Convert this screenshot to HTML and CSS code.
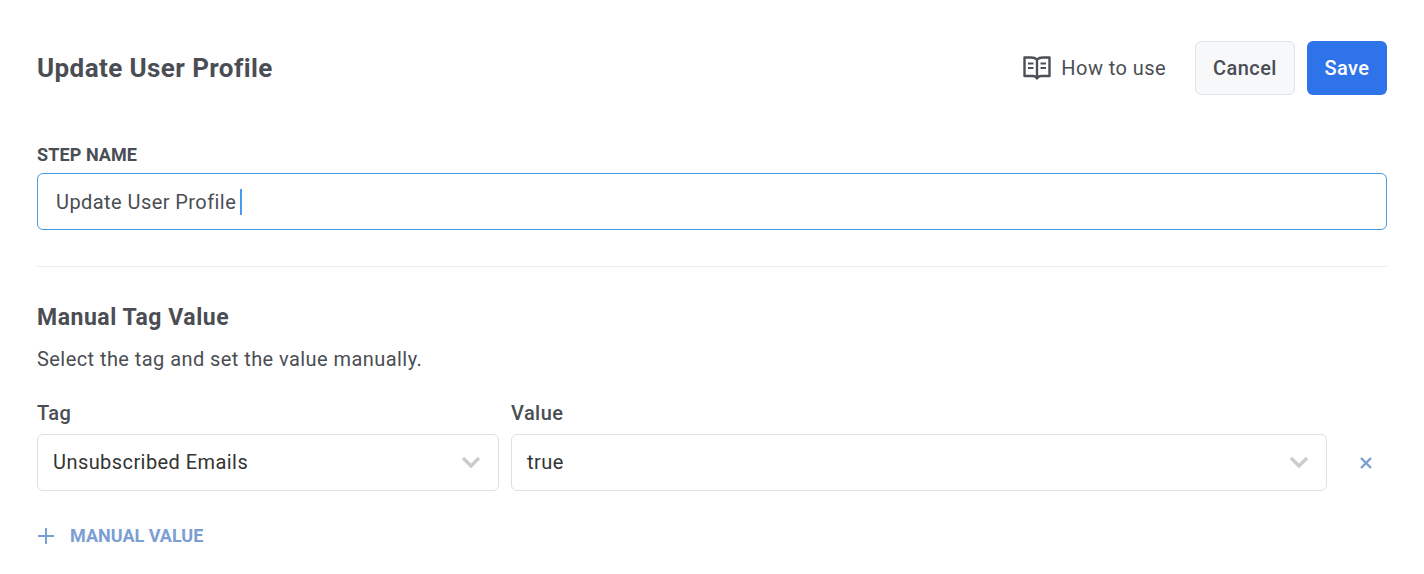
FILE: index.html
```html
<!DOCTYPE html>
<html lang="en">
<head>
    <meta charset="UTF-8">
    <title>Update User Profile</title>
    <link rel="stylesheet" href="styles.css">
</head>
<body>
    <div class="page">
        <div class="header">
            <h1>Update User Profile</h1>
            <div class="actions">
                <a href="#" class="how-to">
                    <svg class="book-icon" width="28" height="26" viewBox="0 0 28 26" fill="none" stroke="#4b5056" stroke-width="2.400">
                        <path d="M14 4.500C12.500 3 10.500 2.500 8 2.500H1.500v18.500H10c2 0 3 .6 4 2.500 1-1.900 2-2.500 4-2.500h8.500V2.500H20c-2.500 0-4.500.5-6 2z" stroke-linejoin="round"/>
                        <path d="M14 4.500V23"/>
                        <path d="M5 8.500h5.500M5 13h5.500M17.500 8.500H23M17.500 13H23" stroke-width="2"/>
                    </svg>
                    How to use
                </a>
                <button class="btn btn-cancel">Cancel</button>
                <button class="btn btn-save">Save</button>
            </div>
        </div>

        <label class="step-label">STEP NAME</label>
        <div class="step-input">Update User Profile<span class="caret"></span></div>

        <hr class="divider">

        <h2>Manual Tag Value</h2>
        <p class="hint">Select the tag and set the value manually.</p>

        <div class="tag-row">
            <div class="field field-tag">
                <label>Tag</label>
                <div class="select">
                    <span>Unsubscribed Emails</span>
                    <svg width="20" height="12" viewBox="0 0 20 12" fill="none" stroke="#cccccc" stroke-width="3.400"><path d="M2 2l8 8 8-8"/></svg>
                </div>
            </div>
            <div class="field field-value">
                <label>Value</label>
                <div class="select">
                    <span>true</span>
                    <svg width="20" height="12" viewBox="0 0 20 12" fill="none" stroke="#cccccc" stroke-width="3.400"><path d="M2 2l8 8 8-8"/></svg>
                </div>
            </div>
            <div class="remove">
                <svg width="12" height="12" viewBox="0 0 12 12" fill="none" stroke="#7b9ed3" stroke-width="2.400"><path d="M1 1l10 10M11 1L1 11"/></svg>
            </div>
        </div>

        <a href="#" class="add-value">
            <svg width="18" height="18" viewBox="0 0 18 18" fill="none" stroke="#7b9ed3" stroke-width="2"><path d="M9 1v16M1 9h16"/></svg>
            MANUAL VALUE
        </a>
    </div>
</body>
</html>
```

FILE: styles.css
```css
* {
    margin: 0;
    padding: 0;
    box-sizing: border-box;
}
body {
    font-family: Roboto, "Liberation Sans", sans-serif;
    background: #fff;
    color: #4a4e54;
    letter-spacing: 0.027em;
}
.page {
    padding: 41px 37px 0;
}
.header {
    display: flex;
    justify-content: space-between;
    align-items: center;
    height: 54px;
}
h1 {
    font-size: 26px;
    font-weight: 700;
    letter-spacing: 0.016em;
}
.actions {
    display: flex;
    align-items: center;
}
.how-to {
    display: flex;
    align-items: center;
    gap: 10px;
    margin-right: 29px;
    color: #4a4e54;
    text-decoration: none;
    font-size: 20px;
}
.btn {
    height: 54px;
    border-radius: 6px;
    font-family: inherit;
    font-size: 20px;
    font-weight: 500;
    letter-spacing: inherit;
}
.btn-cancel {
    width: 100px;
    background: #f6f8fa;
    border: 1px solid #dfe2e7;
    color: #4a4e54;
    margin-right: 12px;
}
.btn-save {
    width: 80px;
    background: #2e73ea;
    border: none;
    color: #fff;
}
.step-label {
    display: block;
    margin-top: 50px;
    font-size: 18px;
    font-weight: 700;
    line-height: 20px;
    letter-spacing: 0.005em;
}
.step-input {
    display: flex;
    align-items: center;
    height: 57px;
    margin-top: 8px;
    padding-left: 18px;
    border: 1px solid #4a9be8;
    border-radius: 6px;
    font-size: 20px;
}
.caret {
    width: 2px;
    height: 26px;
    margin-left: 4px;
    background: #4a9be8;
}
.divider {
    margin-top: 36px;
    border: none;
    border-top: 1px solid #ebedef;
}
h2 {
    margin-top: 37px;
    font-size: 23px;
    font-weight: 700;
    line-height: 28px;
    letter-spacing: 0.023em;
}
.hint {
    margin-top: 15px;
    font-size: 20px;
    line-height: 24px;
}
.tag-row {
    display: flex;
    margin-top: 30px;
}
.field label {
    display: block;
    font-size: 20px;
    font-weight: 500;
    line-height: 24px;
    margin-bottom: 9px;
}
.field-tag {
    width: 462px;
    margin-right: 12px;
}
.field-value {
    width: 816px;
}
.select {
    display: flex;
    justify-content: space-between;
    align-items: center;
    height: 57px;
    padding: 0 17px 1px 15px;
    border: 1px solid #dfe0e3;
    border-radius: 6px;
    font-size: 20px;
    color: #333;
}
.remove {
    display: flex;
    flex: 1;
    justify-content: flex-end;
    align-items: center;
    align-self: flex-end;
    height: 57px;
    padding-right: 15px;
}
.add-value {
    display: flex;
    align-items: center;
    gap: 15px;
    margin-top: 34px;
    color: #7b9ed3;
    text-decoration: none;
    font-size: 18px;
    font-weight: 700;
    letter-spacing: 0;
}
```
